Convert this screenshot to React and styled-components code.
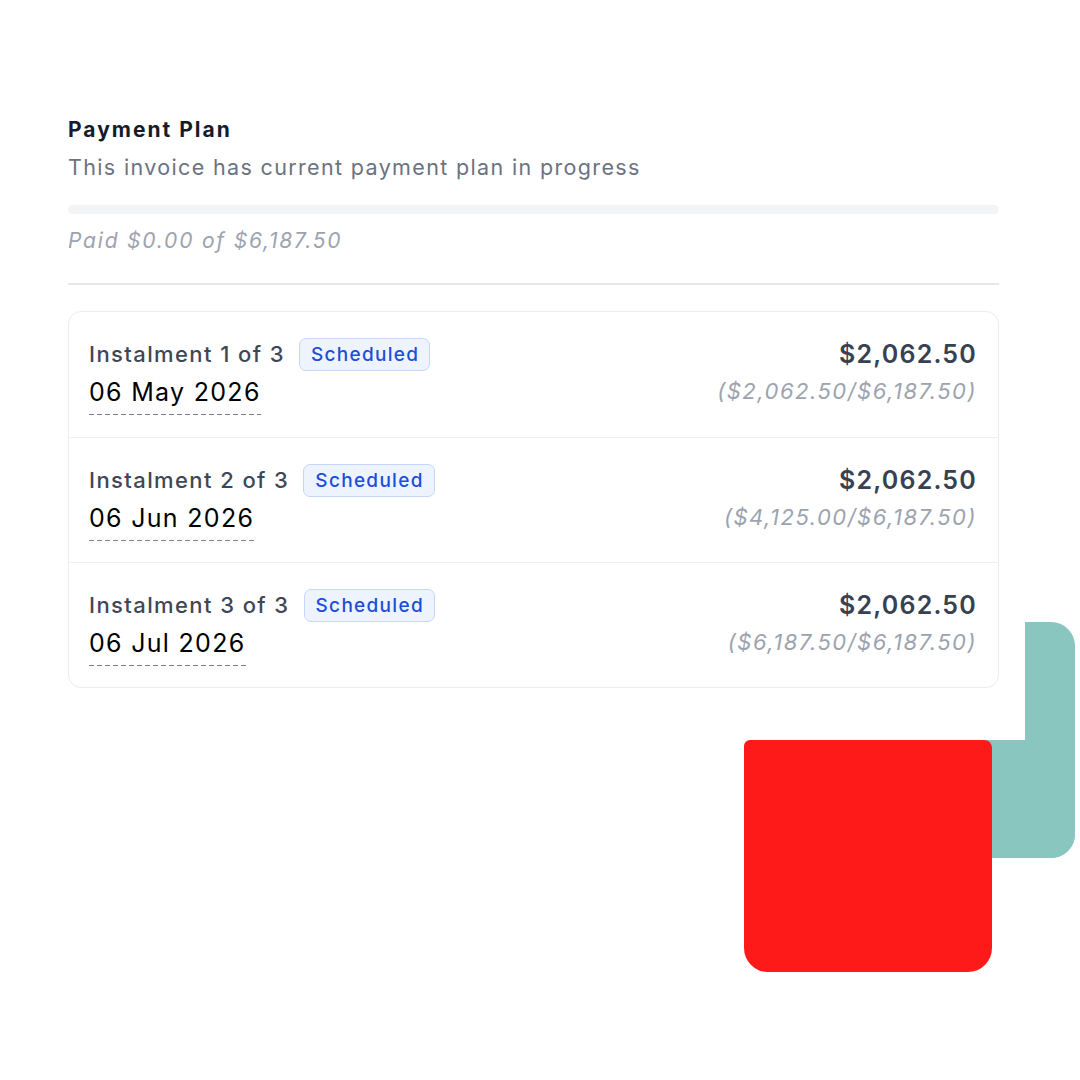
import React from "react";
import styled, { createGlobalStyle } from "styled-components";

const Global = createGlobalStyle`
  html, body { margin: 0; padding: 0; background: #ffffff; }
  body { font-family: Inter, "Noto Sans", "Liberation Sans", sans-serif; -webkit-font-smoothing: antialiased; }
`;

const Page = styled.div`
  position: relative;
  width: 1080px;
  height: 1080px;
  overflow: hidden;
  background: #fff;
  box-sizing: border-box;
  padding: 115px 80px 0 68px;
`;

const Section = styled.section`
  width: 931px;
  display: flex;
  flex-direction: column;
`;

const Title = styled.h2`
  margin: 0;
  font-size: 21px;
  line-height: 30px;
  font-weight: 700;
  letter-spacing: 2px;
  color: #141b2b;
`;

const Subtitle = styled.p`
  margin: 7px 0 0;
  font-size: 21.5px;
  line-height: 30px;
  letter-spacing: 1.35px;
  color: #6b7280;
`;

const Track = styled.div`
  margin-top: 23px;
  height: 9px;
  border-radius: 6px;
  background: #f3f4f6;
  overflow: hidden;
`;

const Fill = styled.div`
  height: 100%;
  background: #2563eb;
`;

const PaidText = styled.p`
  margin: 12px 0 0;
  font-size: 21px;
  line-height: 30px;
  font-style: italic;
  letter-spacing: 1.8px;
  color: #9ca3af;
`;

const Divider = styled.hr`
  margin: 27px 0 0;
  border: 0;
  border-top: 2px solid #e5e7eb;
`;

const Card = styled.div`
  margin-top: 26px;
  border: 1.5px solid #ececee;
  border-radius: 13px;
  overflow: hidden;
`;

const Row = styled.div`
  height: 125px;
  box-sizing: border-box;
  padding: 25px 21px 0 20px;
  display: flex;
  justify-content: space-between;
  align-items: flex-start;
  & + & { border-top: 1.5px solid #efeff1; }
`;

const Left = styled.div`
  display: flex;
  flex-direction: column;
  align-items: flex-start;
`;

const LabelLine = styled.div`
  display: flex;
  align-items: center;
  gap: 14px;
`;

const Label = styled.span`
  font-size: 22px;
  line-height: 34px;
  font-weight: 500;
  letter-spacing: 1.4px;
  color: #3f4756;
`;

const Badge = styled.span`
  display: inline-flex;
  align-items: center;
  height: 33px;
  box-sizing: border-box;
  padding: 0 10px 0 11px;
  border: 1.5px solid #c6d6fb;
  border-radius: 7px;
  background: #eef4ff;
  color: #1d4ed8;
  font-size: 19px;
  font-weight: 500;
  letter-spacing: 1.3px;
`;

const DateText = styled.span`
  margin-top: 4px;
  font-size: 25px;
  line-height: 34px;
  letter-spacing: 1.3px;
  color: #000;
  padding-bottom: 6px;
  background-image: linear-gradient(to right, #7b8190 62%, transparent 62%);
  background-size: 8px 1.5px;
  background-repeat: repeat-x;
  background-position: left bottom;
`;

const Right = styled.div`
  display: flex;
  flex-direction: column;
  align-items: flex-end;
`;

const Amount = styled.span`
  font-size: 25px;
  line-height: 34px;
  font-weight: 600;
  letter-spacing: 1.2px;
  color: #374151;
`;

const Cumulative = styled.span`
  margin-top: 5px;
  font-size: 22px;
  line-height: 30px;
  font-style: italic;
  letter-spacing: 1.5px;
  color: #9ca3af;
`;

const TealBar = styled.div`
  position: absolute;
  left: 1025px;
  top: 622px;
  width: 50px;
  height: 236px;
  background: #88c6bf;
  border-radius: 0 24px 24px 0;
`;

const TealFoot = styled.div`
  position: absolute;
  left: 980px;
  top: 740px;
  width: 95px;
  height: 118px;
  background: #88c6bf;
  border-radius: 0 0 24px 0;
`;

const Red = styled.div`
  position: absolute;
  left: 744px;
  top: 740px;
  width: 248px;
  height: 232px;
  background: #ff1a1a;
  border-radius: 6px 8px 24px 24px;
`;

const rows = [
  { n: 1, date: "06 May 2026", cum: "$2,062.50" },
  { n: 2, date: "06 Jun 2026", cum: "$4,125.00" },
  { n: 3, date: "06 Jul 2026", cum: "$6,187.50" },
];

export default function App() {
  const paid = 0;
  const total = 6187.5;
  return (
    <>
      <Global />
      <Page>
        <Section>
          <Title>Payment Plan</Title>
          <Subtitle>This invoice has current payment plan in progress</Subtitle>
          <Track>
            <Fill style={{ width: `${(paid / total) * 100}%` }} />
          </Track>
          <PaidText>Paid $0.00 of $6,187.50</PaidText>
          <Divider />
          <Card>
            {rows.map((r) => (
              <Row key={r.n}>
                <Left>
                  <LabelLine>
                    <Label>Instalment {r.n} of 3</Label>
                    <Badge>Scheduled</Badge>
                  </LabelLine>
                  <DateText>{r.date}</DateText>
                </Left>
                <Right>
                  <Amount>$2,062.50</Amount>
                  <Cumulative>({r.cum}/$6,187.50)</Cumulative>
                </Right>
              </Row>
            ))}
          </Card>
        </Section>
        <TealBar />
        <TealFoot />
        <Red />
      </Page>
    </>
  );
}
